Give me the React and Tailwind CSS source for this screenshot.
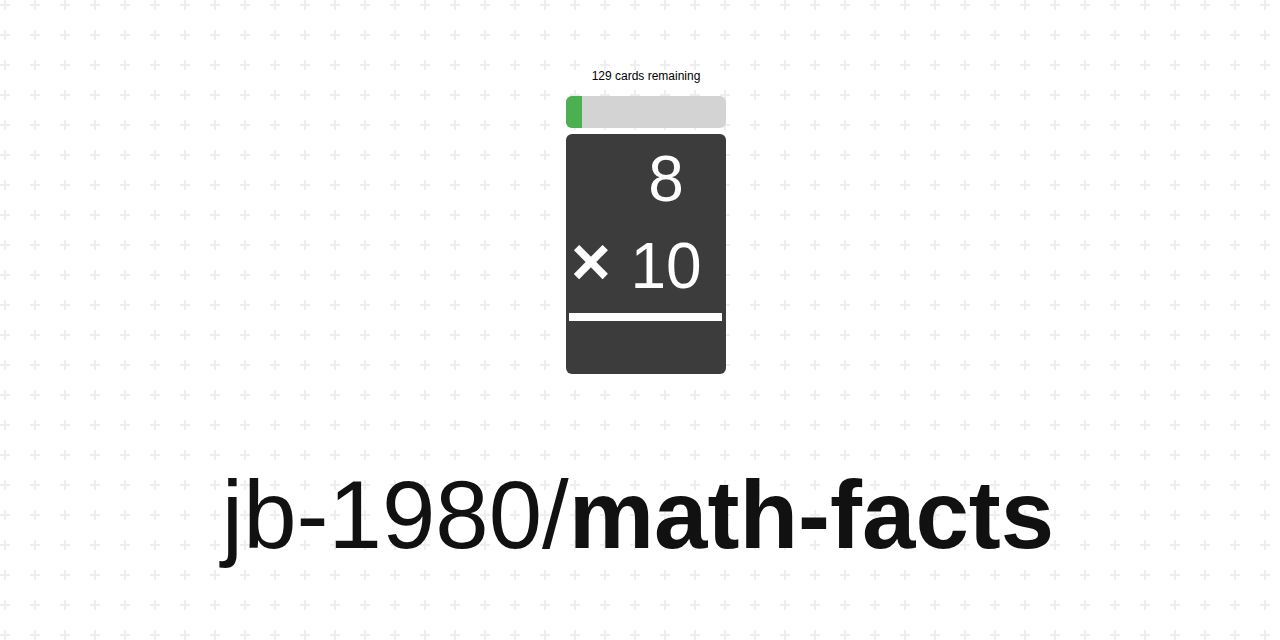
import React from "react";

const total = 130;
const remaining = 129;

const FlashCard = ({ top, op, bottom }) => {
  return (
    <div className="mt-[6px] w-[160px] h-[240px] bg-[#3c3c3c] rounded-md text-white pt-[13px]">
      <div className="grid grid-cols-[40px_1fr] text-[64px] leading-none">
        <div></div>
        <div className="text-center">{top}</div>
      </div>
      <div className="grid grid-cols-[40px_1fr] items-start text-[64px] leading-none mt-[23px]">
        <div className="text-center pl-[5px] text-[68px] leading-[55px] font-bold">{op}</div>
        <div className="text-center">{bottom}</div>
      </div>
      <div className="mt-[15px] ml-[3px] mr-[4px] h-[8px] bg-white"></div>
    </div>
  );
};

const App = () => {
  const pct = ((total - remaining) / total) * 100;

  return (
    <div
      className="w-full h-[640px] overflow-hidden flex flex-col items-center bg-white font-['Liberation_Sans',Arial,sans-serif] text-[#111] bg-[image:linear-gradient(to_right,transparent_10px,#fff_10px),linear-gradient(to_bottom,transparent_10px,#fff_10px),linear-gradient(to_bottom,transparent_4px,#eee_4px,#eee_6px,transparent_6px),linear-gradient(to_right,transparent_4px,#eee_4px,#eee_6px,transparent_6px)] [background-size:30px_30px]"
    >
      <div className="ml-[12px] flex flex-col items-center">
        <div className="pt-[69px] text-[12px] leading-[14px] text-black">
          {remaining} cards remaining
        </div>
        <div className="mt-[13px] w-[160px] h-8 bg-[#d3d3d3] rounded-md overflow-hidden">
          <div className="h-full bg-[#4caf50]" style={{ width: `${Math.max(pct, 10)}%` }}></div>
        </div>
        <FlashCard top="8" op="×" bottom="10" />
      </div>
      <div className="mt-[93px] mr-[4px] text-[96px] leading-none whitespace-nowrap">
        jb-1980/<span className="font-bold">math-facts</span>
      </div>
    </div>
  );
};

export default App;
